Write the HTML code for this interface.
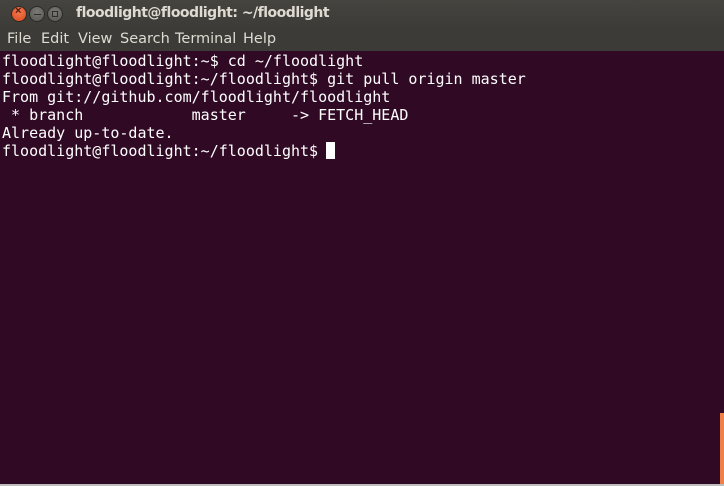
<!DOCTYPE html>
<html><head><meta charset="utf-8"><style>
html,body{margin:0;padding:0;width:724px;height:486px;overflow:hidden;background:#300a24;}
#title{position:absolute;left:0;top:0;width:724px;height:29px;background:linear-gradient(#45443f,#3c3b37);}
#menu{position:absolute;left:0;top:29px;width:724px;height:22px;background:#3c3b37;}
.btn{position:absolute;top:6px;width:16px;height:16px;border-radius:50%;box-sizing:border-box;border:1px solid #2a2a27;}
#t{position:absolute;left:76px;top:5px;font:bold 14px "DejaVu Sans","Liberation Sans",sans-serif;letter-spacing:-0.5px;color:#dfdbd2;}
.mi{position:absolute;top:31px;font:14.5px "DejaVu Sans","Liberation Sans",sans-serif;color:#dfdbd2;}
pre{position:absolute;left:2px;top:52px;margin:0;font:15px "DejaVu Sans Mono","Liberation Mono",monospace;line-height:18px;color:#fff;}
#cur{position:absolute;left:326px;top:142px;width:9px;height:17px;background:#fff;}
#sb{position:absolute;left:720px;top:413px;width:4px;height:71px;background:#f0804a;}
#bot{position:absolute;left:0;top:484px;width:724px;height:2px;background:#bdbdbd;}
</style></head><body>
<div id="title">
<div class="btn" style="left:11px;background:radial-gradient(circle at 50% 35%,#f47a50,#d9471c);"><span style="position:absolute;left:3px;top:-2px;font:bold 11px sans-serif;color:#4a1a0a">×</span></div>
<div class="btn" style="left:29px;background:radial-gradient(circle at 50% 35%,#7b7a75,#55544f);"><span style="position:absolute;left:4px;top:7px;width:7px;height:1px;background:#2e2d2a"></span></div>
<div class="btn" style="left:47px;background:radial-gradient(circle at 50% 35%,#7b7a75,#55544f);"><span style="position:absolute;left:4px;top:4px;width:6px;height:6px;border:1px solid #2e2d2a;box-sizing:border-box"></span></div>
<div id="t">floodlight@floodlight: ~/floodlight</div>
</div>
<div id="menu"></div>
<div class="mi" style="left:7px">File</div>
<div class="mi" style="left:41px">Edit</div>
<div class="mi" style="left:78px">View</div>
<div class="mi" style="left:120px">Search</div>
<div class="mi" style="left:175px">Terminal</div>
<div class="mi" style="left:243px">Help</div>
<pre>floodlight@floodlight:~$ cd ~/floodlight
floodlight@floodlight:~/floodlight$ git pull origin master
From git://github.com/floodlight/floodlight
 * branch            master     -&gt; FETCH_HEAD
Already up-to-date.
floodlight@floodlight:~/floodlight$ </pre>
<div id="cur"></div>
<div id="sb"></div>
<div id="bot"></div>
</body></html>
